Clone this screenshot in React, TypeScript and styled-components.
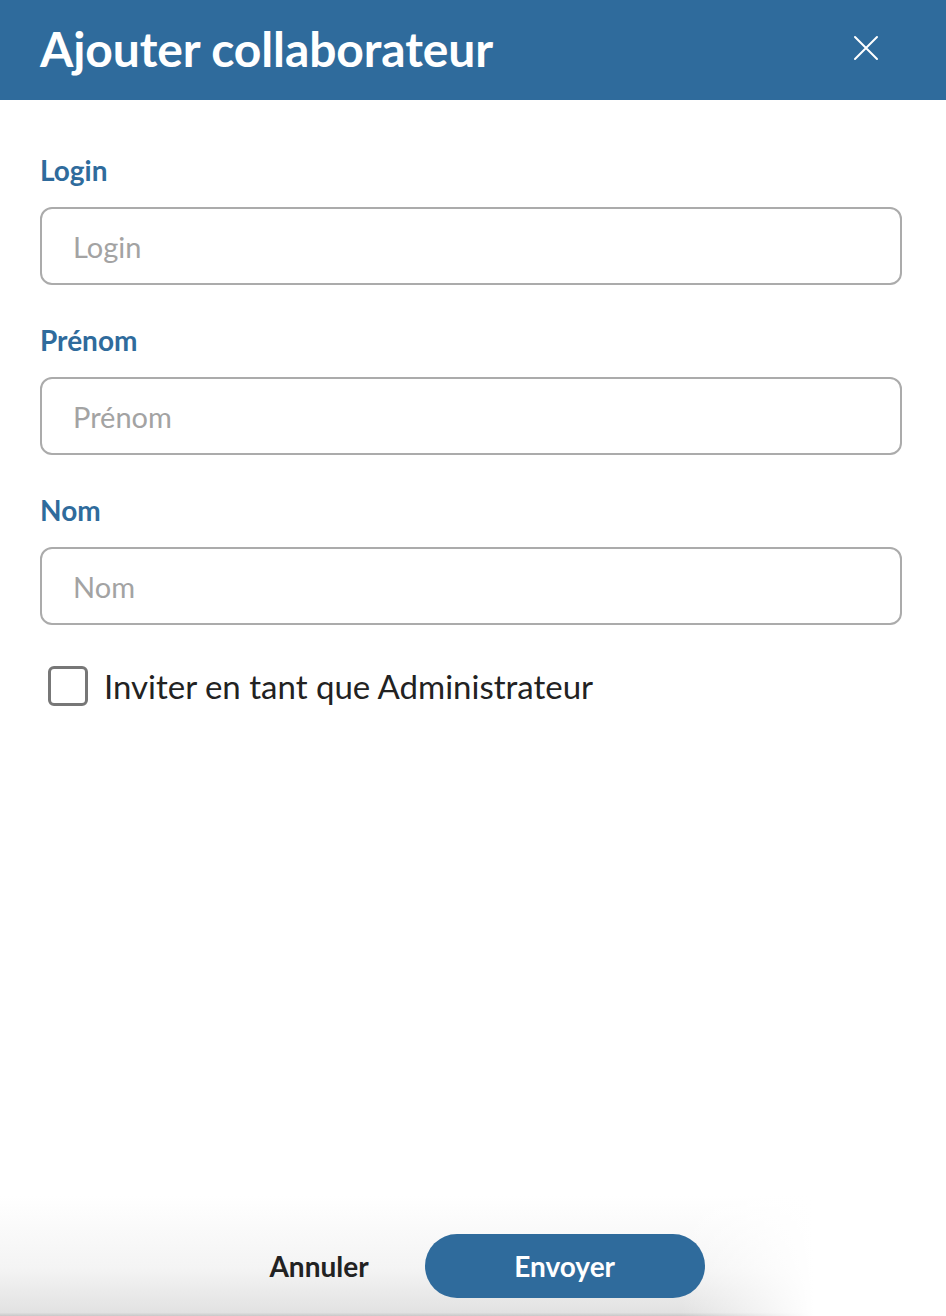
import React, { useState } from 'react';
import styled, { createGlobalStyle } from 'styled-components';

const BLUE = '#2f6b9c';

const GlobalStyle = createGlobalStyle`
  html, body {
    margin: 0;
    padding: 0;
    background: #ffffff;
  }
  body {
    font-family: Lato, 'Open Sans', 'Liberation Sans', sans-serif;
  }
  * {
    box-sizing: border-box;
  }
`;

const fields = [
  { id: 'login', label: 'Login' },
  { id: 'firstname', label: 'Prénom' },
  { id: 'lastname', label: 'Nom' },
];

export default function App(): JSX.Element {
  const [values, setValues] = useState<Record<string, string>>({});
  const [admin, setAdmin] = useState(false);

  return (
    <>
      <GlobalStyle />
      <MODAL>
        <HEADER>
          <TITLE>Ajouter collaborateur</TITLE>
          <CLOSE aria-label="Fermer">
            <svg width="26" height="26" viewBox="0 0 26 26">
              <path d="M2 2 L24 24 M24 2 L2 24" stroke="#fff" strokeWidth="2" strokeLinecap="round" />
            </svg>
          </CLOSE>
        </HEADER>

        <BODY>
          {fields.map((field) => (
            <FIELD key={field.id}>
              <LABEL htmlFor={field.id}>{field.label}</LABEL>
              <INPUT
                id={field.id}
                placeholder={field.label}
                value={values[field.id] || ''}
                onChange={(e) => setValues({ ...values, [field.id]: e.target.value })}
              />
            </FIELD>
          ))}

          <CHECK_ROW>
            <CHECKBOX checked={admin} onClick={() => setAdmin(!admin)} />
            <CHECK_TEXT>Inviter en tant que Administrateur</CHECK_TEXT>
          </CHECK_ROW>
        </BODY>

        <FOOTER>
          <CANCEL>Annuler</CANCEL>
          <SEND>Envoyer</SEND>
        </FOOTER>
      </MODAL>
    </>
  );
}

const MODAL = styled.div`
  width: 946px;
  height: 1316px;
  display: flex;
  flex-direction: column;
  background: #fff;
  overflow: hidden;
`;

const HEADER = styled.header`
  height: 100px;
  flex-shrink: 0;
  background: ${BLUE};
  display: flex;
  align-items: center;
  justify-content: space-between;
  padding: 0 67px 4px 40px;
`;

const TITLE = styled.h1`
  margin: 0;
  color: #fff;
  font-size: 48px;
  font-weight: 700;
  letter-spacing: -0.1px;
`;

const CLOSE = styled.button`
  border: none;
  background: none;
  padding: 0;
  display: flex;
  cursor: pointer;
`;

const BODY = styled.main`
  flex: 1;
  padding: 52px 44px 0 40px;
  display: flex;
  flex-direction: column;
`;

const FIELD = styled.div`
  display: flex;
  flex-direction: column;
  gap: 19px;
  margin-bottom: 37px;
`;

const LABEL = styled.label`
  color: ${BLUE};
  font-size: 28px;
  font-weight: 700;
  line-height: 36px;
`;

const INPUT = styled.input`
  height: 78px;
  width: 100%;
  border: 2px solid #ababab;
  border-radius: 12px;
  padding: 0 31px;
  font-family: inherit;
  font-size: 29px;
  color: #222;
  outline: none;
  &::placeholder {
    color: #a3a3a3;
  }
`;

const CHECK_ROW = styled.label`
  display: flex;
  align-items: center;
  gap: 16px;
  padding-left: 8px;
  margin-top: 4px;
  cursor: pointer;
`;

const CHECKBOX = styled.span<{ checked: boolean }>`
  width: 40px;
  height: 40px;
  border: 3px solid #777;
  border-radius: 6px;
  background: ${({ checked }) => (checked ? BLUE : '#fff')};
`;

const CHECK_TEXT = styled.span`
  font-size: 33px;
  line-height: 40px;
  color: #222;
`;

const FOOTER = styled.footer`
  height: 120px;
  flex-shrink: 0;
  display: flex;
  align-items: center;
  justify-content: center;
  gap: 56px;
  padding: 20px 0 0 28px;
  background:
    linear-gradient(to right, rgba(255, 255, 255, 0) 72%, #fff 86%),
    linear-gradient(to bottom, #fff 0%, #f4f4f4 60%, #e2e2e2 97%, #c8c8c8 100%);
`;

const CANCEL = styled.button`
  border: none;
  background: none;
  padding: 0;
  font-family: inherit;
  font-size: 28px;
  font-weight: 700;
  color: #222;
  cursor: pointer;
`;

const SEND = styled.button`
  width: 280px;
  height: 64px;
  border: none;
  border-radius: 32px;
  background: ${BLUE};
  color: #fff;
  font-family: inherit;
  font-size: 28px;
  font-weight: 700;
  cursor: pointer;
`;
